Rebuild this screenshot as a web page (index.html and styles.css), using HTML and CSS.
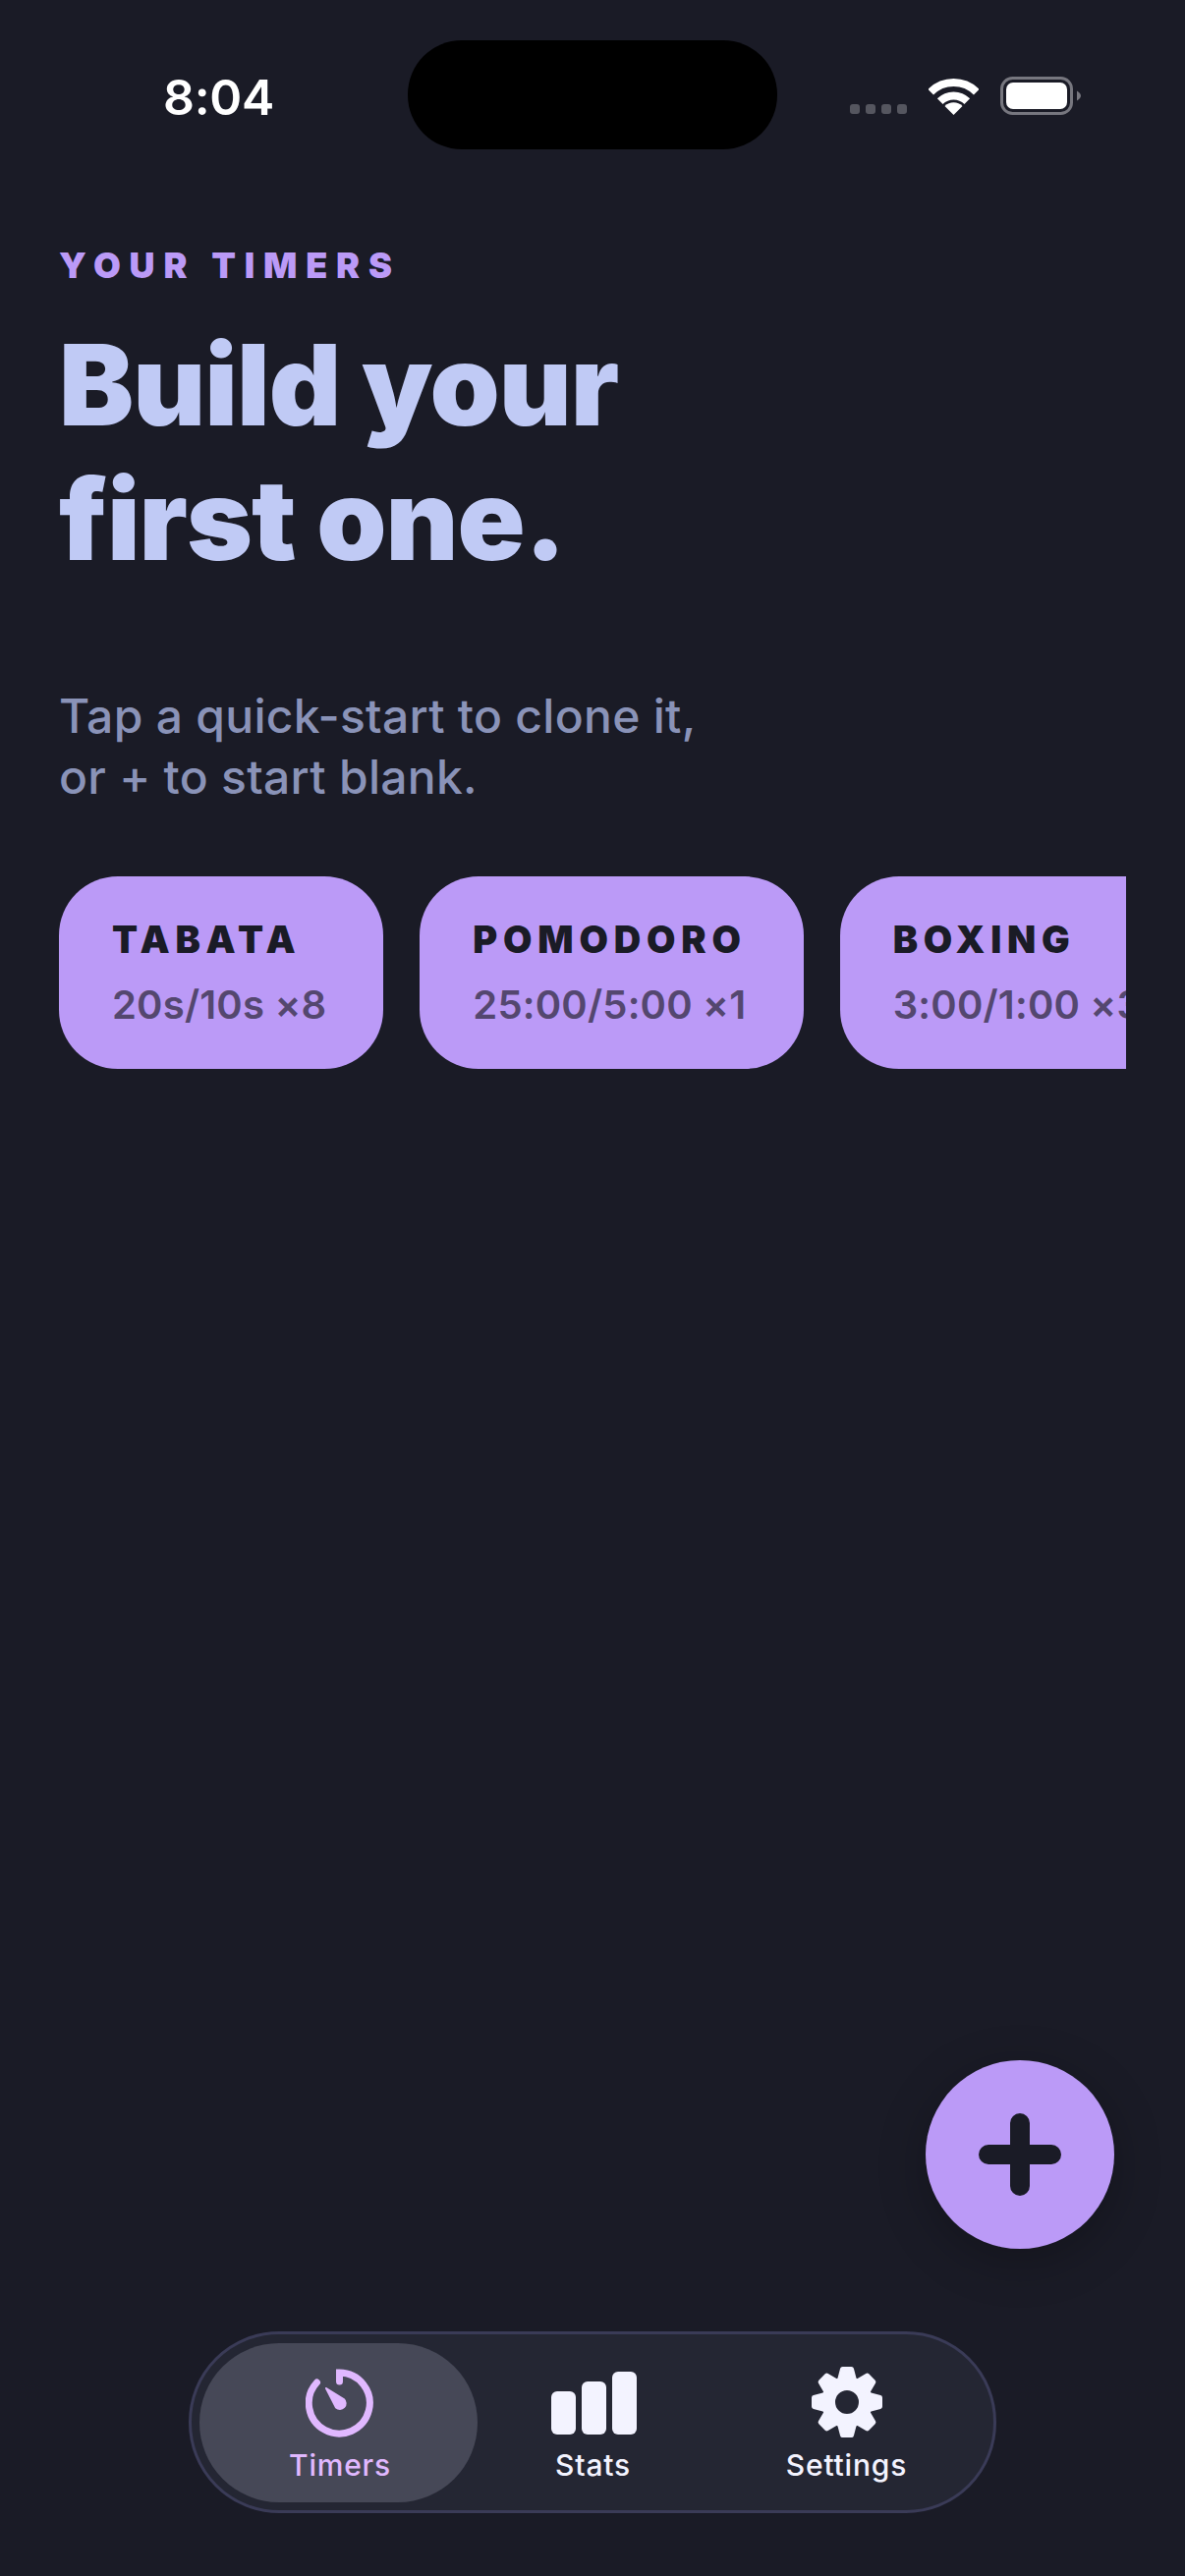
FILE: index.html
```html
<!DOCTYPE html>
<html lang="en">
<head>
   <meta charset="UTF-8">
   <meta name="viewport" content="width=device-width, initial-scale=1.0">
   <title>Timers</title>
   <link rel="stylesheet" href="styles.css">
</head>
<body>
   <div class="screen">
       <div class="status">
           <span class="time">8:04</span>
           <div class="island"></div>
           <div class="status-icons">
               <div class="signal"><i></i><i></i><i></i><i></i></div>
               <svg class="wifi" width="51" height="37" viewBox="0 0 51 37">
                   <path d="M2.2 13.7A33 33 0 0 1 48.8 13.7" fill="none" stroke="#fff" stroke-width="8"/>
                   <path d="M11.7 23.2A19.5 19.5 0 0 1 39.3 23.2" fill="none" stroke="#fff" stroke-width="8"/>
                   <path d="M16.5 28A12.7 12.7 0 0 1 34.5 28L25.5 37Z" fill="#fff"/>
               </svg>
               <svg class="battery" width="82" height="39" viewBox="0 0 82 39">
                   <rect x="1.5" y="1.5" width="71" height="36" rx="11" fill="none" stroke="#77777f" stroke-width="3"/>
                   <rect x="6" y="6" width="62" height="27" rx="7" fill="#fff"/>
                   <path d="M78 14.5Q82 17 82 19.5T78 24.500Z" fill="#77777f"/>
               </svg>
           </div>
       </div>

       <div class="content">
           <div class="eyebrow">YOUR TIMERS</div>
           <h1>Build your<br>first one.</h1>
           <p class="hint">Tap a quick-start to clone it,<br>or + to start blank.</p>
           <div class="chips">
               <div class="chip">
                   <div class="chip-name">TABATA</div>
                   <div class="chip-info">20s/10s ×8</div>
               </div>
               <div class="chip">
                   <div class="chip-name">POMODORO</div>
                   <div class="chip-info">25:00/5:00 ×1</div>
               </div>
               <div class="chip">
                   <div class="chip-name">BOXING</div>
                   <div class="chip-info">3:00/1:00 ×3</div>
               </div>
           </div>
       </div>

       <div class="fab">
           <svg width="84" height="84" viewBox="0 0 84 84">
               <path d="M42 10V74M10 42H74" fill="none" stroke="#1a1b26" stroke-width="20" stroke-linecap="round"/>
           </svg>
       </div>

       <nav class="tabs">
           <div class="tab active">
               <svg width="70" height="70" viewBox="0 0 70 70">
                   <path d="M34.500 13V4A31 31 0 1 1 11.500 14" fill="none" stroke="#e0b8ff" stroke-width="7" stroke-linecap="round"/>
                   <path d="M21 20L38.800 31A5.500 5.500 0 1 1 31 39.500Z" fill="#e0b8ff" stroke="#e0b8ff" stroke-width="2" stroke-linejoin="round"/>
               </svg>
               <span>Timers</span>
           </div>
           <div class="tab">
               <svg class="stats-icon" width="87" height="70" viewBox="0 0 87 70">
                   <rect x="0" y="23" width="25" height="44" rx="6" fill="#f3f3ff"/>
                   <rect x="31" y="13" width="25" height="54" rx="6" fill="#f3f3ff"/>
                   <rect x="62" y="3" width="25" height="64" rx="6" fill="#f3f3ff"/>
               </svg>
               <span>Stats</span>
           </div>
           <div class="tab">
               <svg width="72" height="72" viewBox="0 0 72 72">
                   <defs>
                       <polygon id="tooth" points="31.500,2.500 40.500,2.500 43.500,14 28.500,14" fill="#f3f3ff" stroke="#f3f3ff" stroke-width="5" stroke-linejoin="round"/>
                   </defs>
                   <circle cx="36" cy="36" r="19" fill="none" stroke="#f3f3ff" stroke-width="14"/>
                   <use href="#tooth"/>
                   <use href="#tooth" transform="rotate(45 36 36)"/>
                   <use href="#tooth" transform="rotate(90 36 36)"/>
                   <use href="#tooth" transform="rotate(135 36 36)"/>
                   <use href="#tooth" transform="rotate(180 36 36)"/>
                   <use href="#tooth" transform="rotate(225 36 36)"/>
                   <use href="#tooth" transform="rotate(270 36 36)"/>
                   <use href="#tooth" transform="rotate(315 36 36)"/>
               </svg>
               <span>Settings</span>
           </div>
       </nav>
   </div>
</body>
</html>
```

FILE: styles.css
```css
html, body {
    margin: 0;
    padding: 0;
    background-color: #1a1b26;
}
.screen {
    display: flex;
    flex-direction: column;
    width: 1206px;
    height: 2622px;
    overflow: hidden;
    font-family: Inter, "Noto Sans", sans-serif;
    background-color: #1a1b26;
}

/* status bar */
.status {
    display: flex;
    align-items: flex-start;
    height: 111px;
    padding-top: 41px;
}
.time {
    width: 415px;
    padding-top: 27px;
    padding-left: 166px;
    box-sizing: border-box;
    font-size: 50px;
    font-weight: 600;
    line-height: 62px;
    letter-spacing: -0.3px;
    color: #fff;
}
.island {
    width: 376px;
    height: 111px;
    border-radius: 55px;
    background-color: #000;
}
.status-icons {
    display: flex;
    align-items: flex-end;
    height: 76px;
    padding-left: 74px;
}
.signal {
    display: flex;
    gap: 6px;
    margin-right: 22px;
}
.signal i {
    width: 10px;
    height: 10px;
    margin-bottom: 1px;
    border-radius: 3px;
    background-color: #55565f;
}
.wifi {
    margin-right: 22px;
}

/* heading */
.content {
    padding: 96px 60px 0;
}
.eyebrow {
    font-size: 36px;
    font-weight: 900;
    line-height: 44px;
    letter-spacing: 8.8px;
    color: #bb9af7;
}
h1 {
    margin: 31px 0 0;
    font-size: 114px;
    font-weight: 900;
    line-height: 137px;
    letter-spacing: -1px;
    color: #c0caf5;
}
.hint {
    margin: 101px 0 0;
    font-size: 48px;
    font-weight: 500;
    line-height: 62px;
    letter-spacing: 0.28px;
    color: #8a93b8;
}

/* quick-start chips */
.chips {
    display: flex;
    gap: 37px;
    width: 1086px;
    margin-top: 70px;
    overflow: hidden;
}
.chip {
    flex-shrink: 0;
    height: 196px;
    box-sizing: border-box;
    padding: 41px 58px 0 54px;
    border-radius: 60px;
    background-color: #bb9af7;
}
.chip-name {
    font-size: 38px;
    font-weight: 900;
    line-height: 46px;
    letter-spacing: 5.8px;
    color: #1a1b26;
}
.chip-info {
    margin-top: 20px;
    font-size: 40px;
    font-weight: 600;
    line-height: 47px;
    letter-spacing: 0.2px;
    white-space: nowrap;
    color: #54476f;
}

/* add button */
.fab {
    display: flex;
    align-items: center;
    justify-content: center;
    align-self: flex-end;
    width: 192px;
    height: 192px;
    margin-top: auto;
    margin-right: 72px;
    border-radius: 50%;
    background-color: #bb9af7;
    box-shadow: 0 12px 48px rgba(0, 0, 0, 0.25);
}

/* tab bar */
.tabs {
    display: grid;
    grid-template-columns: 283px 232px 284px;
    align-items: center;
    align-self: center;
    width: 822px;
    height: 185px;
    box-sizing: border-box;
    margin: 84px 0 64px;
    padding: 0 8px;
    border: 3px solid #3a3b57;
    border-radius: 92px;
    background-color: #242633;
}
.tab {
    display: flex;
    flex-direction: column;
    align-items: center;
    justify-content: flex-end;
    height: 162px;
    box-sizing: border-box;
    padding: 0 0 20px 3px;
    border-radius: 81px;
    font-size: 30px;
    font-weight: 500;
    line-height: 36px;
    letter-spacing: 0.8px;
    color: #f3f3ff;
}
.tab span {
    margin-top: 10px;
}
.stats-icon {
    margin-left: 2px;
}
.active {
    background-color: #464857;
    color: #e0b8ff;
}
```
